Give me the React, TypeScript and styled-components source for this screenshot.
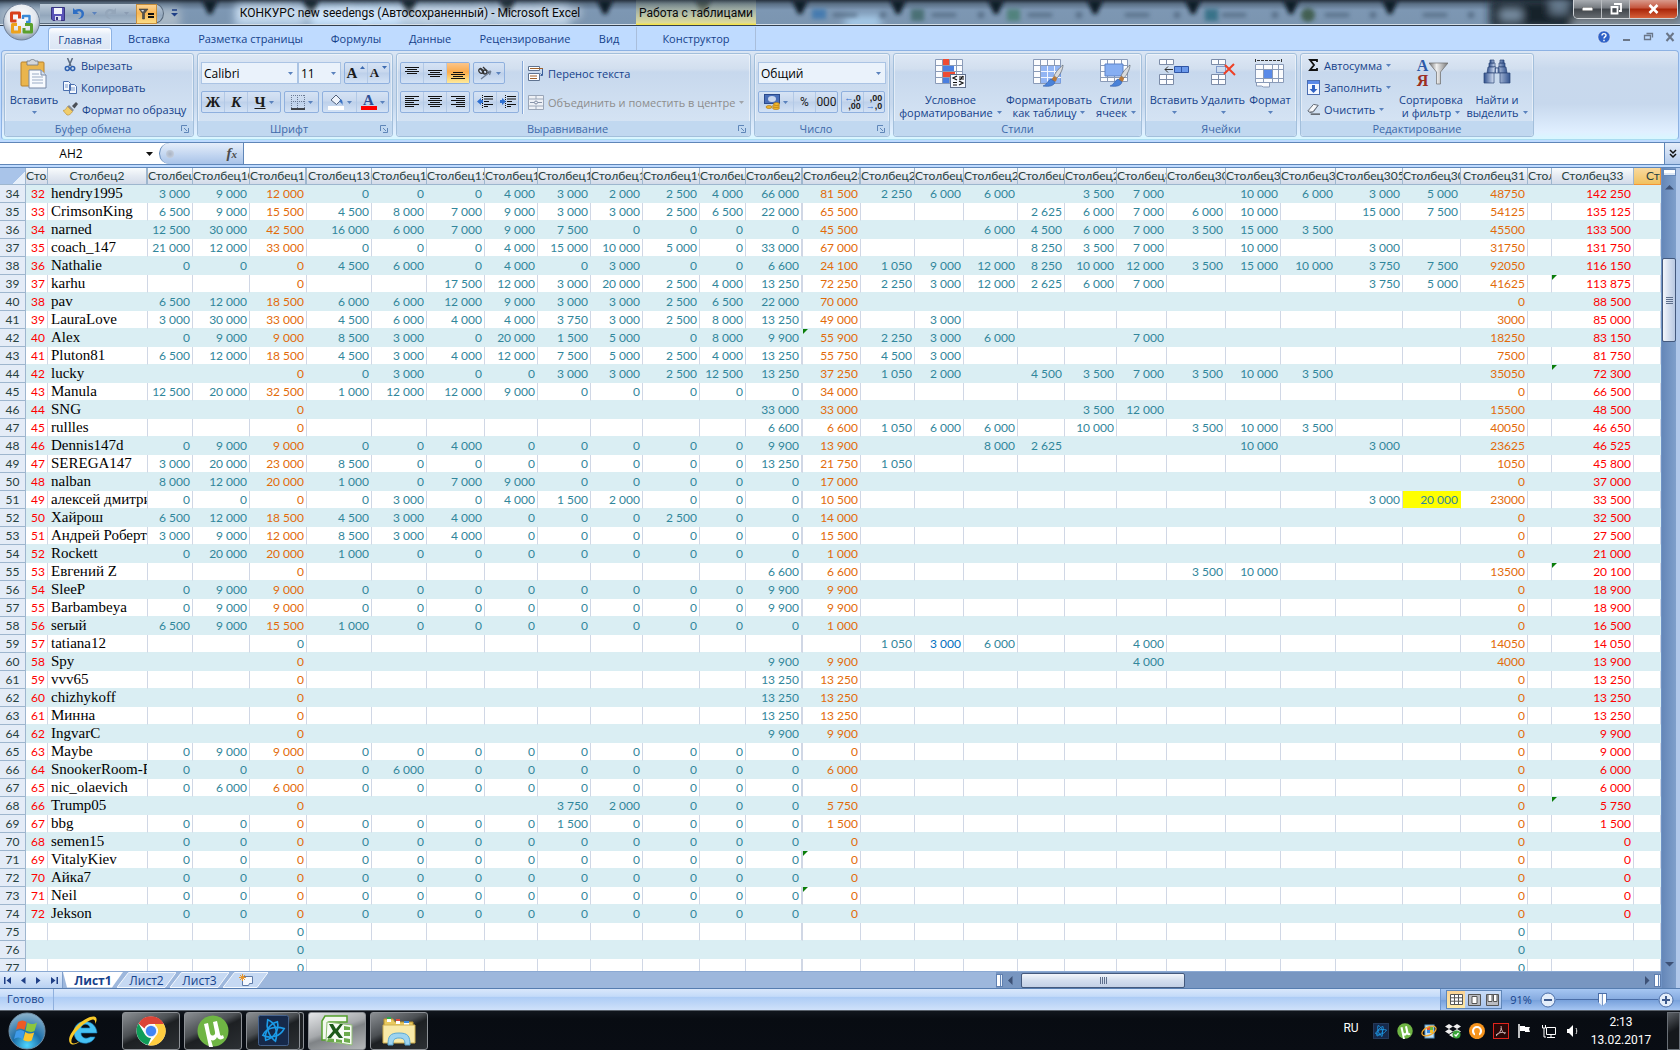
import React from "react";
import styled, { createGlobalStyle, css } from "styled-components";

const UI = `"Open Sans", "Noto Sans", sans-serif`;
const CAPTION = `Roboto, "Open Sans", sans-serif`;
const CELL = `Lato, "Open Sans", sans-serif`;
const NAME = `"Liberation Serif", serif`;

const GlobalStyle = createGlobalStyle`
  *, *::before, *::after { box-sizing: border-box; }
  body { margin: 0; font-family: ${UI}; font-size: 11px; color: #15428b; background: #bfdbff; overflow: hidden; }
  button, select, input { font: inherit; color: inherit; }
  button { border: 0; padding: 0; background: none; }
  svg { display: block; flex: none; }
`;

/* ---------- shell ---------- */
const Desktop = styled.div`
  display: flex;
  flex-direction: column;
  height: 100vh;
`;

/* ---------- title bar ---------- */
const TitleBar = styled.header`
  position: relative;
  display: flex;
  height: 26px;
  color: #0a0a0a;
  font-family: ${CAPTION};
  font-size: 12px;
  background: linear-gradient(#27323f 0, #5a6f85 4px, #7d97b3 10px, #7b95b0 100%);
  border-bottom: 1px solid #33404f;
  box-shadow: inset 0 -1px 0 #d5dfe8;
`;
const Glass = styled.svg`
  position: absolute;
  inset: 0;
  width: 100%;
  height: 24px;
`;
const OfficeButton = styled.button`
  position: absolute;
  left: 3px;
  top: 3px;
  z-index: 2;
  width: 37px;
  height: 38px;
`;
const QuickAccess = styled.div`
  position: relative;
  display: flex;
  align-items: center;
  gap: 7px;
  width: 124px;
  height: 21px;
  margin: 3px 0 0 40px;
  padding-left: 11px;
  border: 1px solid #58697b;
  border-left: 0;
  border-radius: 0 11px 11px 0;
  background: linear-gradient(#bccad8, #93a7bc 60%, #a9bccf);
`;
const QuickFilter = styled.button`
  display: grid;
  place-items: center;
  flex: none;
  width: 21px;
  height: 20px;
  border: 1px solid #c78f3d;
  background: linear-gradient(#fbd394, #f7b655 45%, #fbdc85);
`;
const CustomizeButton = styled.button`
  position: relative;
  width: 20px;
  display: grid;
  place-items: center;
`;
const WindowTitle = styled.h1`
  position: relative;
  flex: 0 0 452px;
  margin: 0;
  text-align: center;
  font-size: 12px;
  font-weight: 400;
  line-height: 27px;
  white-space: nowrap;
  text-shadow: 0 0 8px #fff, 0 0 10px #dce8f4;
`;
const ContextTitle = styled.div`
  position: relative;
  width: 120px;
  line-height: 27px;
  text-align: center;
  white-space: nowrap;
  background: linear-gradient(rgba(90, 105, 110, 0.3), rgba(200, 205, 165, 0.8) 60%, #dcd99a 90%, #f8e53c);
`;
const WindowButtons = styled.div`
  position: relative;
  display: flex;
  height: 19px;
  margin: 0 2px 0 auto;
  border: 1px solid #d0d4d8;
  border-top: 0;
  border-radius: 0 0 5px 5px;
  overflow: hidden;
`;
const WindowButton = styled.button<{ $close?: boolean }>`
  display: grid;
  place-items: center;
  width: ${(p) => (p.$close ? 47 : 28)}px;
  border-right: ${(p) => (p.$close ? 0 : 1)}px solid #b8bcc0;
  background: ${(p) =>
    p.$close
      ? "linear-gradient(#d99a8c, #c4533b 45%, #a92408 50%, #d5603a)"
      : "linear-gradient(#a9adb2, #74797f 45%, #3f444a 50%, #666b70)"};
`;

/* ---------- ribbon tabs ---------- */
const TabRow = styled.nav`
  display: flex;
  height: 24px;
  padding-left: 48px;
  background: #bfdbff;
`;
const RibbonTab = styled.button<{ $w: number; $on?: boolean; $context?: boolean }>`
  width: ${(p) => p.$w}px;
  height: 23px;
  margin-top: 1px;
  color: #15428b;
  white-space: nowrap;
  ${(p) =>
    p.$on &&
    css`
      border: 1px solid #8db2e3;
      border-bottom: 0;
      border-radius: 4px 4px 0 0;
      background: linear-gradient(#fff, #e6eef9 30%, #dbe6f4);
      box-shadow: inset 0 0 0 1px #f4f9ff;
    `}
  ${(p) =>
    p.$context &&
    css`
      margin-left: 5px;
      border-left: 1px solid #a9bedb;
      border-right: 1px solid #a9bedb;
    `}
`;
const TabTools = styled.div`
  display: flex;
  align-items: center;
  gap: 10px;
  margin: 0 4px 2px auto;
`;

/* ---------- ribbon ---------- */
const Ribbon = styled.section`
  display: flex;
  gap: 3px;
  height: 90px;
  margin: 0 1px;
  padding: 2px;
  border: 1px solid #8db2e3;
  border-bottom-color: #a8dcf0;
  border-radius: 4px;
  background: linear-gradient(#dbe6f4, #c9d9ed 20%, #c7d8ed 60%, #e0efff 92%, #d8f7ff);
`;
const Group = styled.fieldset<{ $w: number }>`
  display: flex;
  flex-direction: column;
  width: ${(p) => p.$w}px;
  min-width: 0;
  margin: 0;
  padding: 0;
  border: 1px solid #a3bfdb;
  border-radius: 3px;
  box-shadow: inset 0 0 0 1px rgba(255, 255, 255, 0.45);
  background: linear-gradient(#dee8f5, #d2dfef 18%, #c7d8ed 22%, #d8e6f5);
`;
const GroupBody = styled.div`
  display: flex;
  flex: 1;
  padding: 0 3px;
`;
const GroupFoot = styled.div`
  display: flex;
  align-items: center;
  justify-content: center;
  height: 15px;
  color: #3e6aaa;
  background: #c1d8f0;
  border-radius: 0 0 3px 3px;
  span { flex: 1; text-align: center; line-height: 15px; }
  button { margin-right: 4px; }
`;
const BigButton = styled.button<{ $w: number }>`
  display: flex;
  flex-direction: column;
  align-items: center;
  flex: none;
  width: ${(p) => p.$w}px;
  padding-top: 5px;
  line-height: 13px;
  white-space: nowrap;
`;
const BigIcon = styled.span`
  display: flex;
  align-items: flex-start;
  height: 34px;
`;
const ArrowLine = styled.span`
  display: flex;
  align-items: center;
  justify-content: center;
  gap: 4px;
  height: 13px;
`;
const SmallStack = styled.div<{ $w?: number }>`
  display: flex;
  flex-direction: column;
  width: ${(p) => (p.$w ? p.$w + "px" : "auto")};
`;
const SmallButton = styled.button<{ $off?: boolean }>`
  display: flex;
  align-items: center;
  gap: 4px;
  height: 22px;
  padding-left: 3px;
  white-space: nowrap;
  color: ${(p) => (p.$off ? "#8d8d8d" : "#15428b")};
`;
const Rows = styled.div`
  display: flex;
  flex-direction: column;
  gap: 7px;
  padding-top: 8px;
`;
const Row = styled.div<{ $gap?: number }>`
  display: flex;
  align-items: center;
  gap: ${(p) => p.$gap ?? 3}px;
  height: 22px;
`;
const Joined = styled.div`
  display: flex;
  height: 22px;
  border: 1px solid #8fb0de;
  border-radius: 2px;
  background: linear-gradient(#d6e3f4, #c8d8ee 45%, #bdd0ea 50%, #d3e2f5);
`;
const ToolButton = styled.button<{ $w?: number; $on?: boolean }>`
  display: flex;
  align-items: center;
  justify-content: center;
  gap: 3px;
  width: ${(p) => p.$w ?? 22}px;
  color: #1b1b1b;
  font-family: ${CAPTION};
  font-size: 12px;
  & + & { border-left: 1px solid #b3c9e6; }
  ${(p) => p.$on && "background: linear-gradient(#fbc58a, #fbaa4a 45%, #fdd77a 80%, #ffe99c);"}
  b, i, u { font-family: ${NAME}; font-weight: 700; font-size: 15px; line-height: 18px; }
`;
const SmallA = styled.b`
  && { font-size: 13px; }
`;
const PickWrap = styled.label<{ $w: number }>`
  display: grid;
  width: ${(p) => p.$w}px;
  height: 22px;
  align-items: center;
  border: 1px solid #abc4e4;
  background: #eaf2fb;
  > select, > svg { grid-area: 1 / 1; }
  > svg { justify-self: end; margin-right: 4px; pointer-events: none; }
`;
const Pick = styled.select`
  appearance: none;
  width: 100%;
  height: 20px;
  padding: 0 2px;
  border: 0;
  outline: 0;
  background: transparent;
  color: #000;
  font-size: 12px;
`;
const Divider = styled.div`
  width: 1px;
  margin: 7px 2px 7px 3px;
  background: #86a8d8;
  box-shadow: 1px 0 0 #f0f6fd;
`;

/* ---------- formula bar ---------- */
const FormulaBar = styled.div`
  display: flex;
  flex: none;
  height: 23px;
  margin-top: 2px;
  border-top: 1px solid #5f86b8;
  border-bottom: 1px solid #5f86b8;
  background: #fff;
`;
const NameBox = styled.input`
  width: 142px;
  border: 0;
  outline: 0;
  text-align: center;
  color: #000;
  background: #fff;
  font-size: 12px;
`;
const NameArrow = styled.button`
  display: grid;
  place-items: center;
  width: 15px;
  margin-right: 2px;
`;
const FxPill = styled.div`
  display: flex;
  align-items: center;
  justify-content: space-between;
  width: 85px;
  padding: 0 6px;
  border-left: 1px solid #5f86b8;
  border-right: 1px solid #5f86b8;
  border-radius: 11px 0 0 11px;
  background: linear-gradient(#e6eefa, #c0d4f0 60%, #a9c3e8);
  i { font: italic 700 15px/18px "Liberation Serif", serif; color: #4c4c4c; }
  small { font-size: 11px; }
`;
const Knob = styled.span`
  width: 8px;
  height: 8px;
  border-radius: 50%;
  background: radial-gradient(#a9b3c4, #cdd6e4);
`;
const FormulaInput = styled.input`
  flex: 1;
  min-width: 0;
  border: 0;
  outline: 0;
  color: #000;
`;
const ExpandButton = styled.button`
  display: grid;
  place-items: center;
  width: 16px;
  border-left: 1px solid #5f86b8;
  background: linear-gradient(#e6eefa, #b4cbec);
`;

/* ---------- sheet ---------- */
const Work = styled.main`
  display: flex;
  flex: 1;
  min-height: 0;
  margin-top: 2px;
  border-top: 1px solid #5f86b8;
`;
const SheetColumn = styled.div`
  display: flex;
  flex: 1;
  flex-direction: column;
  min-width: 0;
`;
const SheetView = styled.div`
  flex: 1;
  min-height: 0;
  overflow: hidden;
  background: #fff;
`;
const Sheet = styled.table`
  width: 100%;
  table-layout: fixed;
  border-collapse: separate;
  border-spacing: 0;
  font-family: ${CELL};
  font-size: 12px;
  color: #31869b;
`;
const HeadCell = styled.th<{ $left?: boolean; $on?: boolean; $thick?: boolean; $inset?: boolean }>`
  height: 17px;
  padding: 0 0 0 ${(p) => (p.$inset ? 12 : 0)}px;
  overflow: hidden;
  border-right: ${(p) => (p.$thick ? 2 : 1)}px solid ${(p) => (p.$on ? "#f29536" : "#9eb6ce")};
  border-bottom: 1px solid ${(p) => (p.$on ? "#f29536" : "#9eb6ce")};
  background: ${(p) => (p.$on ? "linear-gradient(#f9d99f, #f1c15f)" : "linear-gradient(#f9fcfd, #e4eaf2 50%, #d3dbe9)")};
  color: #27413e;
  font-size: 12px;
  font-weight: 400;
  line-height: 16px;
  text-align: ${(p) => (p.$left ? "left" : "center")};
  white-space: nowrap;
`;
const CornerCell = styled.th`
  padding: 0;
  height: 17px;
  border-right: 1px solid #9eb6ce;
  border-bottom: 1px solid #9eb6ce;
  background: linear-gradient(135deg, #a9c4e9 70%, #e6effa 70%);
`;
const RowHead = styled.th`
  height: 18px;
  padding: 0;
  border-right: 1px solid #9eb6ce;
  border-bottom: 1px solid #9eb6ce;
  background: #e4ecf7;
  color: #27413e;
  font-size: 12px;
  font-weight: 400;
  line-height: 17px;
  text-align: center;
`;
type Tone = "teal" | "orange" | "red" | "blue";
const tones: Record<Tone, string> = { teal: "#31869b", orange: "#e26b0a", red: "#ff0000", blue: "#0070c0" };
const Cell = styled.td<{ $tone?: Tone; $thick?: boolean; $flag?: boolean; $mark?: boolean }>`
  height: 18px;
  padding: 0 2px 0 0;
  overflow: hidden;
  border-right: ${(p) => (p.$thick ? 2 : 1)}px solid #d0d7e5;
  border-bottom: 1px solid #daeef3;
  color: ${(p) => tones[p.$tone ?? "teal"]};
  line-height: 17px;
  text-align: right;
  white-space: nowrap;
  ${(p) => p.$flag && "background-image: linear-gradient(135deg, #0a7d0a 3px, transparent 4px);"}
`;
const NameCell = styled(Cell)`
  padding: 0 0 0 3px;
  color: #000;
  font-family: ${NAME};
  font-size: 15px;
  text-align: left;
`;
const BodyRow = styled.tr<{ $band: boolean }>`
  ${(p) => p.$band && `td { background-color: #daeef3; border-right-color: #daeef3; }`}
  td.marked { background-color: #ffff00; border-right-color: #ffff00; }
`;

/* ---------- scroll bars ---------- */
const VScroll = styled.div`
  display: flex;
  flex-direction: column;
  align-items: center;
  width: 19px;
  padding-right: 4px;
  border-left: 1px solid #6f93c5;
  background: linear-gradient(90deg, #6587b8, #7f9fcb 14px, #b1c8ea 14px);
`;
const VSplit = styled.div`
  width: 13px;
  height: 7px;
  margin: 1px 0 4px;
  border: 1px solid #6587b8;
  background: #fff;
  box-shadow: inset 0 -2px 0 #dce7f5;
`;
const VThumb = styled.div`
  display: grid;
  place-content: center;
  gap: 1px;
  width: 14px;
  height: 84px;
  margin-top: 64px;
  border: 1px solid #44597d;
  border-radius: 2px;
  background: linear-gradient(90deg, #f3f6fb, #d4deee 50%, #b9c9e2);
  i { width: 7px; height: 1px; background: #5e6f8c; }
`;
const ScrollArrow = styled.button<{ $end?: boolean }>`
  display: grid;
  place-items: center;
  width: 14px;
  height: 14px;
  ${(p) => p.$end && "margin-top: auto; margin-bottom: 17px;"}
`;
const BottomBar = styled.div`
  display: flex;
  flex: none;
  height: 17px;
  border-top: 1px solid #8ba9d3;
  background: #9db7dc;
`;
const SheetNav = styled.div`
  display: flex;
  align-items: center;
  justify-content: space-around;
  width: 63px;
  border-right: 1px solid #7f9fcb;
  background: linear-gradient(#e3eefc, #b9d1f2);
`;
const TabShape = styled.div<{ $on?: boolean; $w: number }>`
  display: grid;
  width: ${(p) => p.$w}px;
  margin-right: -6px;
  > * { grid-area: 1 / 1; }
`;
const SheetTab = styled.button<{ $on?: boolean }>`
  display: grid;
  place-items: center;
  height: 16px;
  color: #15428b;
  font-size: 12px;
  font-weight: ${(p) => (p.$on ? 700 : 400)};
  line-height: 15px;
`;
const HScroll = styled.div`
  display: flex;
  align-items: center;
  flex: 0 1 665px;
  margin-left: auto;
  background: #7896c1;
`;
const HSplit = styled.div`
  width: 7px;
  height: 13px;
  border: 1px solid #5f7fb0;
  background: linear-gradient(90deg, #fff 3px, #6587b8 3px, #6587b8 4px, #e8f0fa 4px);
`;
const HThumb = styled.div`
  display: flex;
  align-items: center;
  justify-content: center;
  gap: 1px;
  width: 164px;
  height: 15px;
  margin-left: 4px;
  margin-right: auto;
  border: 1px solid #44597d;
  border-radius: 2px;
  background: linear-gradient(#f3f6fb, #d4deee 50%, #c3d0e5);
  i { width: 1px; height: 7px; background: #5e6f8c; }
`;

/* ---------- status bar ---------- */
const StatusBar = styled.footer`
  display: flex;
  flex: none;
  height: 22px;
  border-top: 1px solid #567db0;
  background: linear-gradient(#d9e7fb, #c4dbf9 35%, #adccf5 40%, #cfe1fa);
`;
const Ready = styled.span`
  width: 54px;
  padding-left: 7px;
  border-right: 1px solid #8fb0de;
  line-height: 20px;
`;
const StatusRight = styled.div`
  display: flex;
  align-items: center;
  width: 240px;
  margin-left: auto;
  padding-left: 5px;
  border-left: 1px solid #6f97cf;
  background: linear-gradient(#a6c6f2, #86abe0 50%, #79a2dc 55%, #a5c5f2);
`;
const ViewButtons = styled.div`
  display: flex;
  height: 19px;
  border: 1px solid #5f86b8;
`;
const ViewButton = styled.button<{ $on?: boolean }>`
  display: grid;
  place-items: center;
  width: 18px;
  background: ${(p) => (p.$on ? "linear-gradient(#fbd394, #fde9a6)" : "linear-gradient(#c9dcf6, #a9c5ee)")};
`;
const ZoomValue = styled.button`
  width: 38px;
  text-align: center;
`;
const ZoomSlider = styled.input`
  appearance: none;
  width: 102px;
  height: 16px;
  margin: 0;
  background: linear-gradient(#4a6da7, #4a6da7) center / 100% 1px no-repeat;
  &::-webkit-slider-thumb {
    appearance: none;
    width: 9px;
    height: 13px;
    background: linear-gradient(90deg, #4a6da7 1px, #fff 1px, #dbe6f6 4px, #7a97c4 4px, #7a97c4 5px, #fff 5px, #fff 8px, #4a6da7 8px);
    border-top: 1px solid #4a6da7;
    clip-path: polygon(0 0, 100% 0, 100% 68%, 50% 100%, 0 68%);
  }
`;

/* ---------- Windows taskbar ---------- */
const Taskbar = styled.footer`
  display: flex;
  align-items: center;
  flex: none;
  height: 40px;
  padding-left: 8px;
  border-top: 1px solid #59616b;
  background: linear-gradient(#11161d, #080c12 20%, #090d14);
  color: #fff;
`;
const TaskIcon = styled.button<{ $w: number }>`
  display: grid;
  place-items: center;
  width: ${(p) => p.$w}px;
  height: 38px;
`;
const TaskButton = styled.button<{ $on?: boolean; $stack?: boolean }>`
  display: grid;
  place-items: center;
  width: ${(p) => (p.$stack ? 54 : 58)}px;
  height: 38px;
  margin-right: ${(p) => (p.$stack ? 8 : 4)}px;
  border: 1px solid #8c9095;
  border-radius: 3px;
  background: ${(p) =>
    p.$on
      ? "linear-gradient(160deg, #e4e6e8, #a6a9ac 45%, #7f8386 55%, #b5b8ba)"
      : "linear-gradient(155deg, #8b8f93, #4b4f53 40%, #1d2023 52%, #2c3034)"};
  box-shadow: ${(p) => (p.$stack ? "4px 0 0 -1px #1d2023, 4px 0 0 0 #8c9095" : "none")};
`;
const Tray = styled.div`
  display: flex;
  align-items: center;
  gap: 8px;
  margin-left: auto;
`;
const Lang = styled.button`
  width: 16px;
  margin: 0 6px 5px 0;
  font-family: ${CAPTION};
  font-size: 12px;
`;
const Clock = styled.time`
  width: 72px;
  margin: 0 2px 0 -4px;
  text-align: center;
  font-family: ${CAPTION};
  font-size: 12px;
  line-height: 18px;
`;
const ShowDesktop = styled.button`
  width: 13px;
  height: 38px;
  border: 1px solid #6a7077;
  background: linear-gradient(150deg, #5b6066, #15181c 50%);
`;

/* ---------- icons ---------- */
const Arrow = ({ c = "#5a82bd" }: { c?: string }) => (
  <svg width="5" height="3" viewBox="0 0 5 3"><path d="M0 0h5L2.5 3z" fill={c} /></svg>
);
const Tri = ({ d, c = "#3d5176" }: { d: string; c?: string }) => (
  <svg width="9" height="9" viewBox="0 0 9 9"><path d={d} fill={c} /></svg>
);
const Launcher = () => (
  <svg width="8" height="8" viewBox="0 0 8 8" fill="none" stroke="#5f86b8"><path d="M.5 6V.5H6M7.500 3v4.500H3M3 3l3 3" /></svg>
);
const OfficeLogo = () => (
  <svg width="37" height="38" viewBox="0 0 37 38">
    <defs>
      <radialGradient id="orbBase" cx=".5" cy=".35" r=".65"><stop offset="0" stopColor="#fff" /><stop offset=".6" stopColor="#e3e8ef" /><stop offset="1" stopColor="#8d9cb0" /></radialGradient>
    </defs>
    <circle cx="18.500" cy="19" r="18" fill="url(#orbBase)" stroke="#6f8098" />
    <g fill="none" strokeWidth="3" strokeLinejoin="round">
      <path d="M13.500 18H8.500v-8h8v5.500" stroke="#d8401c" />
      <path d="M20 16v-3h6.500v6H23" stroke="#3a8ad8" strokeWidth="2.400" />
      <path d="M16.500 23v6h-7v-7.500h4.500" stroke="#eda21b" />
      <path d="M22 21.500h6.500v7.500H21V25" stroke="#5aa02c" />
    </g>
  </svg>
);
const SaveIcon = () => (
  <svg width="14" height="14" viewBox="0 0 14 14"><path d="M.5.5h13v13H2l-1.500-1.500z" fill="#5a55b8" stroke="#37347f" /><path d="M3 1h8v6H3z" fill="#f4f6fc" /><path d="M4 9h6v4.500H4z" fill="#dfe3f2" /><path d="M5 10h2v3H5z" fill="#37347f" /></svg>
);
const UndoIcon = ({ c = "#2f6fc4", flip = false }: { c?: string; flip?: boolean }) => (
  <svg width="13" height="13" viewBox="0 0 13 13"><g transform={flip ? "matrix(-1 0 0 1 13 0)" : undefined}><path d="M1 1v6h6L5 5c2-1.500 4.500-.5 4.500 2S8 11 6 12c4 0 6-2.500 6-5.500C12 2.500 7 .5 3 3z" fill={c} /></g></svg>
);
const FilterEq = () => (
  <svg width="15" height="12" viewBox="0 0 15 12"><path d="M0 1h9L5.500 5.500V11h-2V5.500z" fill="#555" stroke="#333" strokeWidth=".5" /><path d="M2 2h3L4 4z" fill="#ddd" /><path d="M9 5h6v2H9zM9 8h6v2H9z" fill="#111" /></svg>
);
const PasteIcon = () => (
  <svg width="28" height="30" viewBox="0 0 28 30"><rect x="1" y="3" width="23" height="24" rx="1" fill="#eab54d" stroke="#b9822c" /><path d="M7 2h3c0-2 5-2 5 0h3v4H7z" fill="#d4d7dc" stroke="#6f7680" strokeWidth=".8" /><path d="M9 11h12l5 5v13H9z" fill="#f7fafe" stroke="#7688a6" /><path d="M21 11v5h5" fill="#d5dfee" stroke="#7688a6" /><path d="M12 15h7M12 18h11M12 21h11M12 24h11" stroke="#9aabc5" /></svg>
);
const CutIcon = () => (
  <svg width="14" height="14" viewBox="0 0 14 14" fill="none"><path d="M4.500 0l3.500 8M9.500 0L6 8" stroke="#5a6a80" strokeWidth="1.500" /><circle cx="4.300" cy="10.500" r="2" stroke="#2d5fae" strokeWidth="1.500" /><circle cx="9.700" cy="10.500" r="2" stroke="#2d5fae" strokeWidth="1.500" /></svg>
);
const CopyIcon = () => (
  <svg width="14" height="13" viewBox="0 0 14 13"><g fill="#f4f8fe" stroke="#4a6fae"><path d="M.5.500h5l2 2v7h-7zM6.500 3.500h5l2 2v7h-7z" /><path d="M2 4h3M2 6h3M8 7h4M8 9h4" stroke="#7c9bcc" /></g></svg>
);
const BrushIcon = () => (
  <svg width="15" height="14" viewBox="0 0 15 14"><path d="M9 4l4-4 2 2-3.500 4.500z" fill="#4a4f57" /><path d="M6 3l5 5-1.500 1.500L4.500 4.500z" fill="#8a8f98" /><path d="M4.500 4.500l5 5C8 12 6 13.500 4 13L0 8.500c2 0 3-1.500 4.500-4z" fill="#f0cd6c" stroke="#b88a2c" strokeWidth=".6" /></svg>
);
const SizeMark = ({ up }: { up?: boolean }) => (
  <svg width="5" height="14" viewBox="0 0 5 14"><path d={up ? "M0 3h5L2.500 0z" : "M0 0h5L2.500 3z"} fill="#3c6ab0" /></svg>
);
const BorderIcon = () => (
  <svg width="14" height="15" viewBox="0 0 14 15"><g stroke="#6a7a94" strokeDasharray="1 1"><path d="M.5 0v13M6.500 0v13M13.500 0v13M0 .5h14M0 6.500h14" /></g><path d="M0 14h14" stroke="#111" strokeWidth="1.500" /></svg>
);
const FillIcon = () => (
  <svg width="16" height="16" viewBox="0 0 16 16"><path d="M3 6l5-5 5 5-4.500 4.500z" fill="#eef3fb" stroke="#51607a" /><path d="M12 5c2 0 3 2 2.500 6-1-2-2-3-3-3z" fill="#3a72c4" /><path d="M0 12h16v4H0z" fill="#fff" /></svg>
);
const LetterColor = styled.span`
  width: 16px;
  border-bottom: 4px solid #ff0000;
  color: #2d4f95;
  font: 700 15px/12px "Liberation Serif", serif;
`;
const Lines = ({ y, w, align = "center" }: { y: number[]; w: number[]; align?: "left" | "center" | "right" }) => (
  <svg width="15" height="14" viewBox="0 0 15 14">
    {y.map((v, k) => {
      const rest = 14 - w[k];
      const x = align === "left" ? 0 : align === "right" ? rest : rest / 2;
      return <rect key={v} x={x} y={v} width={w[k]} height="1" fill="#111" />;
    })}
  </svg>
);
const ALL = [1, 3, 5, 7, 9, 11];
const IndentIcon = ({ right }: { right?: boolean }) => (
  <svg width="16" height="14" viewBox="0 0 16 14"><path d="M7 1.500h9M7 4h9M7 6.500h5M7 9.500h9M7 11.500h4" stroke="#111" /><path d="M5.500 0v14" stroke="#111" strokeDasharray="1 1" /><path d={right ? "M0 5h2V3l4 3.500L2 10V8H0z" : "M6 5H4V3L0 6.500 4 10V8h2z"} fill="#2f6fd0" /></svg>
);
const OrientIcon = () => (
  <svg width="16" height="14" viewBox="0 0 16 14"><g fill="none" stroke="#333" strokeWidth="1.300"><ellipse cx="4" cy="5" rx="2.500" ry="2" transform="rotate(45 4 5)" /><path d="M3 2l4 5" /><path d="M6 1l6 6" /><ellipse cx="8" cy="6" rx="2" ry="2" /></g><path d="M4 13l9-7M14 5l-4 .5M14 5l-1.500 4" stroke="#6a7a90" fill="none" strokeWidth="1.200" /></svg>
);
const WrapIcon = () => (
  <svg width="16" height="15" viewBox="0 0 16 15"><path d="M.5.500h11v4H.5zM.5 7.500h11v7H.5z" fill="#fff" stroke="#5f7390" /><path d="M2 2.500h13M2 10h7M2 12.500h7" stroke="#a0622c" /><path d="M14.500 3v6M14.500 9.500l-2-2M14.500 9.500h-2" stroke="#3b5f9a" fill="none" /></svg>
);
const MergeIcon = () => (
  <svg width="16" height="15" viewBox="0 0 16 15"><path d="M.5.500h15v14H.5zM.5 4h15M.5 11h15M8 .5V4M8 11v3.500" fill="#eef1f6" stroke="#9aa6b8" /><path d="M2 7.500h4M10 7.500h4" stroke="#8793a8" /><circle cx="8" cy="7.500" r="1.500" fill="none" stroke="#7c88a0" /></svg>
);
const MoneyIcon = () => (
  <svg width="16" height="16" viewBox="0 0 16 16"><rect x=".5" y=".5" width="15" height="9" fill="#4a6fb8" stroke="#2b4a8c" /><ellipse cx="8" cy="5" rx="4" ry="3" fill="#c8d6ee" /><g fill="#f1b62d" stroke="#a8720f" strokeWidth=".6"><ellipse cx="12" cy="14" rx="3.500" ry="1.500" /><ellipse cx="12" cy="12" rx="3.500" ry="1.500" /><ellipse cx="12.500" cy="10" rx="3" ry="1.500" /><ellipse cx="5" cy="13" rx="3" ry="1.500" /></g></svg>
);
const Decimal = styled.span`
  display: grid;
  font: 700 9px/8px "Liberation Sans", sans-serif;
  text-align: right;
  em { font-style: normal; color: #2f6fd0; }
`;
const GridBase = ({ w = 28, h = 25 }: { w?: number; h?: number }) => (
  <path d={`M.5.500h${w - 1}v${h - 1}H.5zM7.500 0v${h}M14.500 0v${h}M21.500 0v${h}M0 6.500h${w}M0 12.500h${w}M0 18.500h${w}`} fill="#fbfcfe" stroke="#8a9bb8" />
);
const Paint = () => (
  <g><path d="M30 6c-4 3-8 8-9 11l3 2c3-3 6-9 6-13z" fill="#d8dadd" stroke="#5f656e" strokeWidth=".7" /><path d="M21 17l3 2c0 2-1 3-2 4l-4-2z" fill="#b8793a" /><path d="M18 20l4 3c-1 4-6 5-12 4 4-1 4-5 8-7z" fill="#4a82d8" stroke="#2d5aa8" strokeWidth=".6" /></g>
);
const CondIcon = () => (
  <svg width="32" height="30" viewBox="0 0 32 30"><GridBase /><path d="M8 0h6v6H8zM8 13h12v5H8z" fill="#ee4b33" /><path d="M8 7h11v5H8zM8 19h6v5H8z" fill="#4a7fe0" /><rect x="15.500" y="15.500" width="15" height="13" fill="#f6f9ff" stroke="#5f6f8c" /><path d="M22 17l-4 2 4 2M18 23.500h4M18 26h4M24 18h5M24 20h5M28 17l-3 4M24 22l4 2-4 2" fill="none" stroke="#111" strokeWidth="1.200" /></svg>
);
const TableIcon = () => (
  <svg width="32" height="30" viewBox="0 0 32 30"><GridBase /><path d="M8 7h20v17H8z" fill="#6f9ef0" opacity=".75" /><path d="M14.500 7v17M21.500 7v17M8 12.500h20M8 18.500h20" stroke="#f0f5ff" /><Paint /></svg>
);
const StylesIcon = () => (
  <svg width="32" height="30" viewBox="0 0 32 30"><GridBase h={23} /><path d="M5 5h18v12H5z" fill="#86aef2" stroke="#5d83c8" /><Paint /></svg>
);
const InsertCells = () => (
  <svg width="32" height="28" viewBox="0 0 32 28"><g fill="#fbfcfe" stroke="#7c8ca8"><path d="M1.500.500h14v5h-14zM8.500.500v5M1.500 15.500h14v10h-14zM8.500 15.500v10M1.500 20.500h14" /></g><path d="M16.500 7.500h14v6h-14zM23.500 7.500v6" fill="#6a98ea" stroke="#2f55a5" /><path d="M7 10.500h8M10 7.500l-3 3 3 3" fill="none" stroke="#333" /></svg>
);
const DeleteCells = () => (
  <svg width="28" height="28" viewBox="0 0 28 28"><g fill="#fbfcfe" stroke="#7c8ca8"><path d="M2.500.500h14v5h-14zM9.500.500v5M2.500 15.500h14v10h-14zM9.500 15.500v10M2.500 20.500h14" /></g><path d="M7.500 7.500h9v6h-9z" fill="none" stroke="#2f55a5" strokeDasharray="1 1" /><path d="M16 6l10 10M25 5L15 15" stroke="#ee4026" strokeWidth="2" /></svg>
);
const FormatCells = () => (
  <svg width="30" height="29" viewBox="0 0 30 29"><path d="M.5 0v4M26.500 0v4M2 1.500h24" stroke="#333" strokeDasharray="3 1" /><path d="M.5 5.500h28v18h-28zM8.500 5.500v18M17.500 5.500v18M23.500 5.500v18M.5 10.500h28M.5 19.500h28" fill="#fbfcfe" stroke="#8a9bb8" /><path d="M9 11h8v8H9z" fill="#5a8ae8" /><path d="M1.500 24v3h5l2 1h6v-4" fill="#fbfcfe" stroke="#8a9bb8" /></svg>
);
const SumIcon = () => (
  <svg width="13" height="12" viewBox="0 0 13 12"><path d="M10 3V1H3l4 5-4 5h7V9" fill="none" stroke="#111" strokeWidth="1.800" /></svg>
);
const FillDown = () => (
  <svg width="13" height="15" viewBox="0 0 13 15"><rect x=".5" y=".5" width="12" height="14" fill="#f2f7ff" stroke="#4a6db0" /><path d="M1 1h11v3H1z" fill="#5a8ae8" /><path d="M5 5h3v4h2.500l-4 4-4-4H5z" fill="#2f62c4" /></svg>
);
const Eraser = () => (
  <svg width="13" height="12" viewBox="0 0 14 12"><path d="M1 8l6-7 5 1-5 7-4 1z" fill="#f7f8fa" stroke="#5c6470" /><path d="M1 8l5 1 6-7" fill="none" stroke="#5c6470" strokeWidth=".6" /><path d="M4 11.500h10" stroke="#111" /></svg>
);
const SortBox = styled.span`
  display: grid;
  grid-template-columns: 13px 17px;
  height: 30px;
  font: 700 16px/14px "Liberation Serif", serif;
  color: #2d5aa8;
  span:nth-of-type(2) { grid-row: 2; color: #9c2f22; }
  svg { grid-row: 1 / 3; grid-column: 2; }
`;
const Funnel = () => (
  <svg width="19" height="26" viewBox="0 0 19 26"><defs><linearGradient id="metal"><stop offset="0" stopColor="#6e6e6e" /><stop offset=".4" stopColor="#f0f0f0" /><stop offset="1" stopColor="#777" /></linearGradient></defs><path d="M0 4h19l-7.500 9v12h-4V13z" fill="url(#metal)" stroke="#6b6b6b" strokeWidth=".7" /></svg>
);
const Binoculars = () => (
  <svg width="28" height="26" viewBox="0 0 28 26"><defs><linearGradient id="lens"><stop offset="0" stopColor="#2f4f8c" /><stop offset=".4" stopColor="#dbe6f8" /><stop offset="1" stopColor="#34548f" /></linearGradient></defs><g fill="url(#lens)" stroke="#2c4677" strokeWidth=".7"><path d="M6 4h6v4H6zM16 4h6v4h-6z" /><path d="M7 1h4v3H7zM17 1h4v3h-4z" /><path d="M5 8h8l-1 6H4zM15 8h8l1 6h-8z" /><path d="M1 14h10v10H1zM17 14h10v10H17z" /><path d="M12 9h4v5h-4z" /></g></svg>
);
const Round = ({ plus }: { plus?: boolean }) => (
  <svg width="16" height="16" viewBox="0 0 16 16"><circle cx="8" cy="8" r="7" fill="#e3edfa" stroke="#4a6da7" /><path d={plus ? "M4 8h8M8 4v8" : "M4 8h8"} stroke="#3e5a8c" strokeWidth="2" /></svg>
);
const StartOrb = () => (
  <svg width="38" height="38" viewBox="0 0 38 38"><defs><radialGradient id="orb" cx=".5" cy=".9" r=".9"><stop offset="0" stopColor="#4fd6ff" /><stop offset=".45" stopColor="#1c6ea8" /><stop offset="1" stopColor="#8fb4cc" /></radialGradient></defs><circle cx="19" cy="19" r="18" fill="url(#orb)" stroke="#6f8ea5" /><path d="M10 10c3-2 6-2 8.500 0l-2 8c-3-2-6-2-8.500 0z" fill="#ee5a24" /><path d="M19.500 10.500c3 2 6 2 9.500 0l-2.500 8.500c-3 1.500-6 1-9-.5z" fill="#8cc63e" /><path d="M8 19.500c3-2 6-2 8.500 0l-2 7.500c-3-2-6-2-8.500 0z" fill="#3f9bea" /><path d="M17.200 20c3 2 6 2 9 .5l-2.500 8c-3 1.500-6 1-8.500-.5z" fill="#fcc52c" /></svg>
);
const IeIcon = () => (
  <svg width="32" height="32" viewBox="0 0 32 32"><path d="M27 22c-4 10-22 8-21-6C7 3 28 3 29 18H13c0 6 7 6 9 4zM13 13h9c-1-5-8-5-9 0z" fill="#46c1f2" stroke="#1a7fc0" strokeWidth=".6" /><path d="M3 29C-4 24 10 6 22 2c7-2 8 2 5 7 1-6-3-5-8-2C9 13 1 25 4 28c2 1 5 0 8-2-4 4-7 4-9 3z" fill="#f8c928" /></svg>
);
const ChromeIcon = () => (
  <svg width="30" height="30" viewBox="0 0 30 30"><circle cx="15" cy="15" r="14.500" fill="#fff" /><path d="M2.500 7.500A14.500 14.500 0 0127.800 8H15a7 7 0 00-6.500 4.500z" fill="#db4437" /><path d="M2.500 7.500l6.300 10.800A7 7 0 0015 22l-3 7A14.500 14.500 0 012.500 7.500z" fill="#0f9d58" /><path d="M27.800 8A14.500 14.500 0 0112.500 29.300L21 18.500A7 7 0 0019 9V8z" fill="#ffcd40" /><circle cx="15" cy="15" r="6.500" fill="#f1f1f1" /><circle cx="15" cy="15" r="5.200" fill="#4285f4" /></svg>
);
const Torrent = ({ s }: { s: number }) => (
  <svg width={s} height={s} viewBox="0 0 32 32"><circle cx="16" cy="16" r="15.500" fill="#6fb544" /><path d="M7 9l4-1 2 10c1 4 6 3 5-1L16 7l4-1 3 13c0 2 2 2 3 1l1 3c-2 2-6 2-7-1-1 3-4 4-6 3l2 7h-4z" fill="#fff" /></svg>
);
const Knot = ({ s }: { s: number }) => (
  <svg width={s} height={s} viewBox="0 0 32 32"><rect x=".5" y=".5" width="31" height="31" rx="2" fill="#16294a" stroke="#46648f" /><g fill="none" stroke="#1b9be8" strokeWidth="1.700"><path d="M10 5c8 3 11 12 8 22-7-5-10-14-8-22z" /><path d="M5 21c3-7 12-10 22-7-4 8-14 11-22 7z" /><path d="M8 26C6 18 12 9 20 7c2 8-3 17-12 19z" /></g></svg>
);
const ExcelIcon = () => (
  <svg width="32" height="31" viewBox="0 0 32 31"><path d="M4 1h22v6H8v18H1V6z" fill="#f2f8ee" stroke="#54a02c" strokeWidth="1.500" /><path d="M6 7l25 3v20L5 26z" fill="#f7fbf4" stroke="#8fbf74" /><path d="M8 9h4l3 5 4-5h3l-5 7 5 7h-4l-4-5-4 5H6l6-7z" fill="#1d5a1a" /><path d="M23 11l6 1v3h-6zM23 17h6v4h-6zM23 23l6 1v4l-6-1zM7 23l6 1v3H6zM15 24l6 1v3l-6-1z" fill="#6cab4c" /></svg>
);
const FolderIcon = () => (
  <svg width="34" height="30" viewBox="0 0 34 30"><path d="M2 3h9l2 3h18v20H2z" fill="#e9c95f" stroke="#b8932c" /><path d="M5 1h4v5H5zM14 3h4v5h-4zM22 5h5v4h-5z" fill="#fff" /><path d="M5 1h4v2H5z" fill="#2fa84a" /><path d="M14 3h4v2h-4z" fill="#e0483a" /><path d="M22 5h5v2h-5z" fill="#3a8ae0" /><path d="M1 9h32v18H1z" fill="#f8e9a8" stroke="#cfae4c" /><path d="M6 29c0-9 2-12 11-12s11 3 11 12h-5c0-5-1-7-6-7s-6 2-6 7z" fill="#9ed4f0" stroke="#5aa8d4" /></svg>
);
const Avast = () => (
  <svg width="16" height="16" viewBox="0 0 16 16"><circle cx="8" cy="8" r="8" fill="#f7941d" /><circle cx="8" cy="8" r="4" fill="none" stroke="#fff" strokeWidth="2.200" /><path d="M6 10h4v6H6z" fill="#f7941d" /></svg>
);
const UpdateIcon = () => (
  <svg width="16" height="16" viewBox="0 0 16 16"><rect x="4" y="2" width="9" height="13" fill="#bfe0f5" stroke="#5a9ac8" /><path d="M6 4h3v3H6z" fill="#e8552c" /><path d="M9 4h3v3H9z" fill="#6cb83a" /><path d="M6 7h3v3H6z" fill="#3a8ae0" /><path d="M9 7h3v3H9z" fill="#f5c12c" /><ellipse cx="8" cy="8" rx="7.500" ry="4" fill="none" stroke="#f0a52c" strokeWidth="1.300" transform="rotate(-25 8 8)" /></svg>
);
const Dropbox = () => (
  <svg width="16" height="16" viewBox="0 0 16 16"><path d="M4 1l4 2.500L4 6 0 3.500zM12 1l4 2.500L12 6 8 3.500zM4 6l4 2.500L4 11 0 8.500zM12 6l4 2.500L12 11 8 8.500zM4 12l4-2.500 4 2.500-4 2.500z" fill="#f0f0f0" /><circle cx="11.500" cy="11.500" r="4" fill="#3aa53a" /><path d="M9.500 11.500l1.500 1.500 2.500-3" fill="none" stroke="#fff" strokeWidth="1.300" /></svg>
);
const Acrobat = () => (
  <svg width="16" height="16" viewBox="0 0 16 16"><rect x=".5" y=".5" width="15" height="15" fill="#2a0808" stroke="#e0241c" /><path d="M3 13c4-3 6-7 5-10M3 12c3-3 7-3 10-2M8 5c1 3 2 5 4 6" fill="none" stroke="#c8b0b0" /></svg>
);
const FlagIcon = () => (
  <svg width="16" height="16" viewBox="0 0 16 16"><path d="M2 1v14" stroke="#fff" strokeWidth="1.500" /><path d="M3 3h5v1h5l-1 2 1 3H8V8H3z" fill="#fff" /></svg>
);
const NetIcon = () => (
  <svg width="16" height="16" viewBox="0 0 16 16" fill="none" stroke="#fff"><path d="M5.500 4.500h9v7h-9zM10 12v2M6 14.500h8M1.500 2v3h3V2M3 5v9h2" /></svg>
);
const SoundIcon = () => (
  <svg width="16" height="16" viewBox="0 0 16 16"><path d="M2 6h2l4-4v12l-4-4H2z" fill="#fff" /><path d="M11 5c1 2 1 4 0 6" fill="none" stroke="#e8e8e8" /></svg>
);
const TabFace = ({ w, on }: { w: number; on?: boolean }) => (
  <svg width={w} height="16" viewBox={`0 0 ${w} 16`} aria-hidden="true">
    <path
      d={on ? `M0 0h${w}L${w - 11} 15.500H4z` : `M11.500 .5H${w}L${w - 11} 15.500H0z`}
      fill={on ? "#fff" : "#c6d9f3"}
      stroke={on ? "none" : "#f4f8fe"}
    />
  </svg>
);

/* ---------- data ---------- */
const columns: { title: string; w?: number; left?: boolean; thick?: boolean; tone?: Tone; plain?: boolean }[] = [
  { title: "Столбец9", w: 45, left: true },
  { title: "Столбец10", w: 57, left: true },
  { title: "Столбец11", w: 57, left: true, tone: "orange" },
  { title: "Столбец13", w: 65 },
  { title: "Столбец14", w: 55, left: true },
  { title: "Столбец15", w: 58, left: true },
  { title: "Столбец16", w: 53, left: true },
  { title: "Столбец17", w: 53, left: true },
  { title: "Столбец18", w: 52, left: true },
  { title: "Столбец19", w: 57, left: true },
  { title: "Столбец20", w: 46, left: true },
  { title: "Столбец21", w: 57, left: true, thick: true },
  { title: "Столбец23", w: 58, left: true, tone: "orange" },
  { title: "Столбец24", w: 54, left: true },
  { title: "Столбец25", w: 49, left: true },
  { title: "Столбец26", w: 54, left: true },
  { title: "Столбец27", w: 47, left: true },
  { title: "Столбец28", w: 52, left: true },
  { title: "Столбец30", w: 50, left: true },
  { title: "Столбец302", w: 59, left: true },
  { title: "Столбец303", w: 55, left: true },
  { title: "Столбец304", w: 55, left: true },
  { title: "Столбец305", w: 67 },
  { title: "Столбец306", w: 58, left: true },
  { title: "Столбец31", w: 67, tone: "orange", plain: true },
  { title: "Столбец32", w: 24, left: true },
  { title: "Столбец33", w: 82, tone: "red" },
];

const ZEROS = "0,0,0,0,0,0,0,0,0,0,0,0,0";
const NONE = ",,,,,,,,,,";
const MID = "0,0,0,0,0,0,0,0";
/* place; name; first half; second half; subtotal; total; flagged column */
const source = `
32;hendry1995;3000,9000,12000,0,0,0,4000,3000,2000,2500,4000,66000,81500;2250,6000,6000,,3500,7000,,10000,6000,3000,5000;48750;142250
33;CrimsonKing;6500,9000,15500,4500,8000,7000,9000,3000,3000,2500,6500,22000,65500;,,,2625,6000,7000,6000,10000,,15000,7500;54125;135125
34;narned;12500,30000,42500,16000,6000,7000,9000,7500,0,0,0,0,45500;,,6000,4500,6000,7000,3500,15000,3500,,;45500;133500
35;coach_147;21000,12000,33000,0,0,0,4000,15000,10000,5000,0,33000,67000;,,,8250,3500,7000,,10000,,3000,;31750;131750
36;Nathalie;0,0,0,4500,6000,0,4000,0,3000,0,0,6600,24100;1050,9000,12000,8250,10000,12000,3500,15000,10000,3750,7500;92050;116150
37;karhu;,,0,,,17500,12000,3000,20000,2500,4000,13250,72250;2250,3000,12000,2625,6000,7000,,,,3750,5000;41625;113875;26
38;pav;6500,12000,18500,6000,6000,12000,9000,3000,3000,2500,6500,22000,70000;${NONE};0;88500
39;LauraLove;3000,30000,33000,4500,6000,4000,4000,3750,3000,2500,8000,13250,49000;,3000,,,,,,,,,;3000;85000
40;Alex;0,9000,9000,8500,3000,0,20000,1500,5000,0,8000,9900,55900;2250,3000,6000,,,7000,,,,,;18250;83150;12
41;Pluton81;6500,12000,18500,4500,3000,4000,12000,7500,5000,2500,4000,13250,55750;4500,3000,,,,,,,,,;7500;81750
42;lucky;,,0,0,3000,0,0,3000,3000,2500,12500,13250,37250;1050,2000,,4500,3500,7000,3500,10000,3500,,;35050;72300;26
43;Manula;12500,20000,32500,1000,12000,12000,9000,0,0,0,0,0,34000;${NONE};0;66500
44;SNG;,,0,,,,,,,,,33000,33000;,,,,3500,12000,,,,,;15500;48500
45;rullles;,,0,,,,,,,,,6600,6600;1050,6000,6000,,10000,,3500,10000,3500,,;40050;46650
46;Dennis147d;0,9000,9000,0,0,4000,0,0,0,0,0,9900,13900;,,8000,2625,,,,10000,,3000,;23625;46525
47;SEREGA147;3000,20000,23000,8500,0,0,0,0,0,0,0,13250,21750;1050,,,,,,,,,,;1050;45800
48;nalban;8000,12000,20000,1000,0,7000,9000,0,0,0,0,0,17000;${NONE};0;37000
49;алексей дмитриев;0,0,0,0,3000,0,4000,1500,2000,0,0,0,10500;,,,,,,,,,3000,20000;23000;33500
50;Хайрош;6500,12000,18500,4500,3000,4000,0,0,0,2500,0,0,14000;${NONE};0;32500
51;Андрей Роберт;3000,9000,12000,8500,3000,4000,0,0,0,0,0,0,15500;${NONE};0;27500
52;Rockett;0,20000,20000,1000,0,0,0,0,0,0,0,0,1000;${NONE};0;21000
53;Евгений Z;,,0,,,,,,,,,6600,6600;,,,,,,3500,10000,,,;13500;20100;26
54;SleeP;0,9000,9000,${MID},9900,9900;${NONE};0;18900
55;Barbambeya;0,9000,9000,${MID},9900,9900;${NONE};0;18900
56;serый;6500,9000,15500,1000,0,0,0,0,0,0,0,0,1000;${NONE};0;16500
57;tatiana12;,,0,,,,,,,,,,;1050,3000,6000,,,4000,,,,,;14050;14050
58;Spy;,,0,,,,,,,,,9900,9900;,,,,,4000,,,,,;4000;13900
59;vvv65;,,0,,,,,,,,,13250,13250;${NONE};0;13250
60;chizhykoff;,,0,,,,,,,,,13250,13250;${NONE};0;13250
61;Минна;,,0,,,,,,,,,13250,13250;${NONE};0;13250
62;IngvarC;,,0,,,,,,,,,9900,9900;${NONE};0;9900
63;Maybe;0,9000,9000,${MID},0,0;${NONE};0;9000
64;SnookerRoom-RU;0,0,0,0,6000,0,0,0,0,0,0,0,6000;${NONE};0;6000
65;nic_olaevich;0,6000,6000,${MID},0,0;${NONE};0;6000
66;Trump05;,,0,,,,,3750,2000,0,0,0,5750;${NONE};0;5750;26
67;bbg;0,0,0,0,0,0,0,1500,0,0,0,0,1500;${NONE};0;1500
68;semen15;${ZEROS};${NONE};0;0
69;VitalyKiev;${ZEROS};${NONE};0;0;12
70;Айка7;${ZEROS};${NONE};0;0
71;Neil;${ZEROS};${NONE};0;0;12
72;Jekson;${ZEROS};${NONE};0;0
;;,,0,,,,,,,,,,;${NONE};0;
;;,,0,,,,,,,,,,;${NONE};0;
;;,,0,,,,,,,,,,;${NONE};0;`;

const players = source.trim().split("\n").map((line) => {
  const [place, name, first, second, subtotal, total, flag] = line.split(";");
  return {
    place,
    name,
    values: [...first.split(","), ...second.split(","), subtotal, "", total],
    flag: flag ? Number(flag) : -1,
  };
});

const group = (v: string, plain?: boolean) => (plain ? v : v.replace(/(\d)(?=\d{3}$)/, "$1 "));

const toneOf = (place: string, col: number, base?: Tone): Tone => {
  if (!place) return "teal";
  if (place === "57" && col === 2) return "teal";
  if (place === "57" && col === 14) return "blue";
  return base ?? "teal";
};

const tabs = [
  ["Главная", 64], ["Вставка", 74], ["Разметка страницы", 129], ["Формулы", 82],
  ["Данные", 66], ["Рецензирование", 124], ["Вид", 44],
] as const;

const Foot = ({ label, launch }: { label: string; launch?: boolean }) => (
  <GroupFoot>
    <span>{label}</span>
    {launch && <button aria-label={label}><Launcher /></button>}
  </GroupFoot>
);

const Combo = ({ w, value, label }: { w: number; value: string; label: string }) => (
  <PickWrap $w={w}>
    <Pick aria-label={label} defaultValue={value}><option>{value}</option></Pick>
    <Arrow />
  </PickWrap>
);

const Big = ({ w, icon, top, bottom }: { w: number; icon: React.ReactNode; top: string; bottom?: string }) => (
  <BigButton $w={w}>
    <BigIcon>{icon}</BigIcon>
    <span>{top}</span>
    <ArrowLine>{bottom}<Arrow /></ArrowLine>
  </BigButton>
);

const Aero = () => (
  <Glass aria-hidden="true">
    <defs>
      <filter id="soft" x="-5%" y="-50%" width="110%" height="200%"><feGaussianBlur stdDeviation="4" /></filter>
      <filter id="edge" x="-50%" y="-50%" width="200%" height="200%"><feGaussianBlur stdDeviation="2" /></filter>
    </defs>
    <g filter="url(#soft)">
      <rect x="0" y="8" width="180" height="20" fill="#a9b8c6" />
      <rect x="235" y="5" width="70" height="22" fill="#b9d2ea" />
      <rect x="310" y="6" width="90" height="22" fill="#c4e0fa" />
      <rect x="400" y="6" width="170" height="22" fill="#b5cbe0" />
      <rect x="845" y="16" width="36" height="12" fill="#a8cdec" />
      <rect x="1490" y="0" width="190" height="28" fill="#14202c" />
      <rect x="1500" y="10" width="22" height="10" fill="#7f95aa" />
      <rect x="1550" y="0" width="18" height="14" fill="#65788b" />
      <rect x="1572" y="18" width="108" height="8" fill="#8d98a2" />
    </g>
    <g fill="#111b27" filter="url(#edge)">
      {[210, 311, 409, 507, 605, 703, 800, 898, 996, 1095, 1193, 1291, 1390].map((x) => (
        <path key={x} d={`M${x - 8} 0h16l-6 14h-4z`} />
      ))}
    </g>
    <g filter="url(#edge)" opacity=".7">
      <rect x="812" y="9" width="14" height="10" fill="#2d6fae" />
      <rect x="911" y="9" width="13" height="12" fill="#35605c" />
      <rect x="1007" y="9" width="13" height="12" fill="#3f7a66" />
      <rect x="1205" y="9" width="13" height="12" fill="#1f6478" />
      <circle cx="1308" cy="15" r="7" fill="#2b4a2c" />
      {[833, 932, 1028, 1125, 1222, 1325, 1423].map((x) => <rect key={x} x={x} y="13" width="24" height="4" fill="#4a6078" />)}
      {[880, 978, 1076, 1174, 1272, 1370, 1468].map((x) => <rect key={x} x={x} y="12" width="6" height="6" fill="#4a6078" />)}
    </g>
  </Glass>
);

export default function App() {
  return (
    <Desktop>
      <GlobalStyle />
      <TitleBar>
        <Aero />
        <OfficeButton aria-label="Office"><OfficeLogo /></OfficeButton>
        <QuickAccess>
          <button aria-label="Сохранить"><SaveIcon /></button>
          <button aria-label="Отменить"><UndoIcon /></button>
          <Arrow />
          <button aria-label="Повторить"><UndoIcon c="#94a6ba" flip /></button>
          <Arrow c="#8b9cb2" />
          <QuickFilter aria-label="Фильтр"><FilterEq /></QuickFilter>
        </QuickAccess>
        <CustomizeButton aria-label="Настройка панели">
          <svg width="7" height="8" viewBox="0 0 7 8"><path d="M1 1h5" stroke="#1f3f86" strokeWidth="1.500" /><path d="M0 4h7L3.500 7.500z" fill="#1f3f86" /></svg>
        </CustomizeButton>
        <WindowTitle>КОНКУРС new seedengs (Автосохраненный) - Microsoft Excel</WindowTitle>
        <ContextTitle>Работа с таблицами</ContextTitle>
        <WindowButtons>
          <WindowButton aria-label="Свернуть"><svg width="11" height="4"><rect width="11" height="4" fill="#fff" stroke="#444" /></svg></WindowButton>
          <WindowButton aria-label="Развернуть"><svg width="12" height="12" viewBox="0 0 12 12"><path d="M4 1h7v7H9M1.500 4h6v6.500h-6z" fill="none" stroke="#fff" strokeWidth="1.800" /></svg></WindowButton>
          <WindowButton $close aria-label="Закрыть"><svg width="11" height="10" viewBox="0 0 11 10"><path d="M1.500 1l8 8M9.500 1l-8 8" stroke="#fff" strokeWidth="2.600" /></svg></WindowButton>
        </WindowButtons>
      </TitleBar>

      <TabRow>
        {tabs.map(([t, w], k) => <RibbonTab key={t} $w={w} $on={k === 0}>{t}</RibbonTab>)}
        <RibbonTab $w={120} $context>Конструктор</RibbonTab>
        <TabTools>
          <button aria-label="Справка"><svg width="14" height="14" viewBox="0 0 14 14"><circle cx="7" cy="7" r="6.300" fill="#2f62c8" stroke="#dfe9f8" /><path d="M5 5.500C5 3 9 3 9 5.300 9 7 7 6.800 7 8.500M7 9.800v1.400" fill="none" stroke="#fff" strokeWidth="1.400" /></svg></button>
          <button aria-label="Свернуть книгу"><svg width="11" height="10"><path d="M2 8h7" stroke="#6a7688" strokeWidth="2" /></svg></button>
          <button aria-label="Восстановить книгу"><svg width="13" height="10" viewBox="0 0 13 10"><path d="M4.500 1.500h6v4M2.500 3.500h6v4h-6z" fill="none" stroke="#6a7688" strokeWidth="1.300" /></svg></button>
          <button aria-label="Закрыть книгу"><svg width="11" height="10" viewBox="0 0 11 10"><path d="M1.500 1l7 8M8.500 1l-7 8" stroke="#6a7688" strokeWidth="2" /></svg></button>
        </TabTools>
      </TabRow>

      <Ribbon>
        <Group $w={190}>
          <GroupBody>
            <Big w={52} icon={<PasteIcon />} top="Вставить" />
            <SmallStack>
              <SmallButton><CutIcon />Вырезать</SmallButton>
              <SmallButton><CopyIcon />Копировать</SmallButton>
              <SmallButton><BrushIcon />Формат по образцу</SmallButton>
            </SmallStack>
          </GroupBody>
          <Foot label="Буфер обмена" launch />
        </Group>

        <Group $w={196}>
          <GroupBody>
            <Rows>
              <Row>
                <Row $gap={0}>
                  <Combo w={97} value="Calibri" label="Шрифт" />
                  <Combo w={43} value="11" label="Размер шрифта" />
                </Row>
                <Joined>
                  <ToolButton aria-label="Увеличить шрифт"><b>A</b><SizeMark up /></ToolButton>
                  <ToolButton aria-label="Уменьшить шрифт"><SmallA>A</SmallA><SizeMark /></ToolButton>
                </Joined>
              </Row>
              <Row>
                <Joined>
                  <ToolButton><b>Ж</b></ToolButton>
                  <ToolButton $w={23}><i>К</i></ToolButton>
                  <ToolButton $w={33}><u>Ч</u><Arrow /></ToolButton>
                </Joined>
                <Joined><ToolButton $w={33} aria-label="Границы"><BorderIcon /><Arrow /></ToolButton></Joined>
                <Joined>
                  <ToolButton $w={33} aria-label="Заливка"><FillIcon /><Arrow /></ToolButton>
                  <ToolButton $w={32} aria-label="Цвет текста"><LetterColor>A</LetterColor><Arrow /></ToolButton>
                </Joined>
              </Row>
            </Rows>
          </GroupBody>
          <Foot label="Шрифт" launch />
        </Group>

        <Group $w={355}>
          <GroupBody>
            <Rows>
              <Row>
                <Joined>
                  <ToolButton aria-label="По верхнему краю"><Lines y={[1, 3, 5, 7]} w={[14, 10, 14, 10]} /></ToolButton>
                  <ToolButton $w={23} aria-label="По середине"><Lines y={[4, 6, 8, 10]} w={[14, 10, 14, 10]} /></ToolButton>
                  <ToolButton $w={23} $on aria-label="По нижнему краю"><Lines y={[6, 8, 10, 12]} w={[10, 14, 10, 14]} /></ToolButton>
                </Joined>
                <Joined><ToolButton $w={30} aria-label="Ориентация"><OrientIcon /><Arrow /></ToolButton></Joined>
              </Row>
              <Row>
                <Joined>
                  <ToolButton aria-label="По левому краю"><Lines align="left" y={ALL} w={[14, 9, 14, 9, 14, 9]} /></ToolButton>
                  <ToolButton $w={23} aria-label="По центру"><Lines y={ALL} w={[14, 10, 14, 10, 14, 10]} /></ToolButton>
                  <ToolButton $w={23} aria-label="По правому краю"><Lines align="right" y={ALL} w={[14, 9, 14, 9, 14, 9]} /></ToolButton>
                </Joined>
                <Joined>
                  <ToolButton aria-label="Уменьшить отступ"><IndentIcon /></ToolButton>
                  <ToolButton aria-label="Увеличить отступ"><IndentIcon right /></ToolButton>
                </Joined>
              </Row>
            </Rows>
            <Divider />
            <Rows>
              <SmallButton><WrapIcon />Перенос текста</SmallButton>
              <SmallButton $off><MergeIcon />Объединить и поместить в центре<Arrow c="#a0a4aa" /></SmallButton>
            </Rows>
          </GroupBody>
          <Foot label="Выравнивание" launch />
        </Group>

        <Group $w={136}>
          <GroupBody>
            <Rows>
              <Combo w={128} value="Общий" label="Числовой формат" />
              <Row>
                <Joined>
                  <ToolButton $w={34} aria-label="Денежный формат"><MoneyIcon /><Arrow /></ToolButton>
                  <ToolButton>%</ToolButton>
                  <ToolButton>000</ToolButton>
                </Joined>
                <Joined>
                  <ToolButton $w={21} aria-label="Увеличить разрядность"><Decimal><span><em>←</em>,0</span><span>,00</span></Decimal></ToolButton>
                  <ToolButton $w={21} aria-label="Уменьшить разрядность"><Decimal><span>,00</span><span><em>→</em>,0</span></Decimal></ToolButton>
                </Joined>
              </Row>
            </Rows>
          </GroupBody>
          <Foot label="Число" launch />
        </Group>

        <Group $w={249}>
          <GroupBody>
            <Big w={107} icon={<CondIcon />} top="Условное" bottom="форматирование" />
            <Big w={90} icon={<TableIcon />} top="Форматировать" bottom="как таблицу" />
            <Big w={44} icon={<StylesIcon />} top="Стили" bottom="ячеек" />
          </GroupBody>
          <Foot label="Стили" />
        </Group>

        <Group $w={152}>
          <GroupBody>
            <Big w={50} icon={<InsertCells />} top="Вставить" />
            <Big w={48} icon={<DeleteCells />} top="Удалить" />
            <Big w={46} icon={<FormatCells />} top="Формат" />
          </GroupBody>
          <Foot label="Ячейки" />
        </Group>

        <Group $w={234}>
          <GroupBody>
            <SmallStack $w={93}>
              <SmallButton><SumIcon />Автосумма<Arrow /></SmallButton>
              <SmallButton><FillDown />Заполнить<Arrow /></SmallButton>
              <SmallButton><Eraser />Очистить<Arrow /></SmallButton>
            </SmallStack>
            <Big w={68} icon={<SortBox><span>А</span><span>Я</span><Funnel /></SortBox>} top="Сортировка" bottom="и фильтр" />
            <Big w={64} icon={<Binoculars />} top="Найти и" bottom="выделить" />
          </GroupBody>
          <Foot label="Редактирование" />
        </Group>
      </Ribbon>

      <FormulaBar>
        <NameBox aria-label="Имя ячейки" defaultValue="AH2" />
        <NameArrow aria-label="Список имён"><svg width="7" height="4"><path d="M0 0h7L3.500 4z" fill="#111" /></svg></NameArrow>
        <FxPill><Knob /><i>f<small>x</small></i></FxPill>
        <FormulaInput aria-label="Строка формул" />
        <ExpandButton aria-label="Развернуть строку формул"><svg width="8" height="10" viewBox="0 0 8 10"><path d="M1 1l3 3 3-3M1 5l3 3 3-3" fill="none" stroke="#111" strokeWidth="1.500" /></svg></ExpandButton>
      </FormulaBar>

      <Work>
        <SheetColumn>
          <SheetView>
            <Sheet>
              <colgroup>
                <col width={26} />
                <col width={22} />
                <col width={100} />
                {columns.map((c) => <col key={c.title} width={c.w} />)}
                <col />
              </colgroup>
              <thead>
                <tr>
                  <CornerCell />
                  <HeadCell $left>Столбец1</HeadCell>
                  <HeadCell $thick>Столбец2</HeadCell>
                  {columns.map((c, k) => <HeadCell key={c.title} $left={c.left} $thick={c.thick || k === 2 || k === 12}>{c.title}</HeadCell>)}
                  <HeadCell $left $on $inset>Столбец34</HeadCell>
                </tr>
              </thead>
              <tbody>
                {players.map((p, r) => (
                  <BodyRow key={r} $band={r % 2 === 0}>
                    <RowHead scope="row">{34 + r}</RowHead>
                    <Cell $tone="red">{p.place}</Cell>
                    <NameCell>{p.name}</NameCell>
                    {p.values.map((v, k) => (
                      <Cell
                        key={k}
                        $tone={toneOf(p.place, k, columns[k].tone)}
                        $thick={columns[k].thick}
                        $flag={p.flag === k}
                        className={p.place === "49" && k === 23 ? "marked" : undefined}
                      >
                        {group(v, columns[k].plain)}
                      </Cell>
                    ))}
                    <Cell />
                  </BodyRow>
                ))}
              </tbody>
            </Sheet>
          </SheetView>
          <BottomBar>
            <SheetNav>
              <button aria-label="Первый лист"><Tri c="#1f3f86" d="M1 1h1.500v7H1zM8 1v7L3.500 4.500z" /></button>
              <button aria-label="Предыдущий лист"><Tri c="#1f3f86" d="M6.500 1v7L2 4.500z" /></button>
              <button aria-label="Следующий лист"><Tri c="#1f3f86" d="M2 1v7l4.500-3.500z" /></button>
              <button aria-label="Последний лист"><Tri c="#1f3f86" d="M6.500 1H8v7H6.500zM1 1v7l4.500-3.500z" /></button>
            </SheetNav>
            <TabShape $w={60}><TabFace w={60} on /><SheetTab $on>Лист1</SheetTab></TabShape>
            <TabShape $w={59}><TabFace w={59} /><SheetTab>Лист2</SheetTab></TabShape>
            <TabShape $w={59}><TabFace w={59} /><SheetTab>Лист3</SheetTab></TabShape>
            <TabShape $w={45}>
              <TabFace w={45} />
              <SheetTab aria-label="Вставить лист"><svg width="14" height="12" viewBox="0 0 14 12"><path d="M3.500 2.500h10v7h-3l-1 2h-6z" fill="#f4f8fe" stroke="#5f7ba8" /><path d="M3.500 0v7M0 3.500h7M1 1l5 5M6 1L1 6" stroke="#e8962c" /></svg></SheetTab>
            </TabShape>
            <HScroll>
              <HSplit />
              <ScrollArrow aria-label="Влево"><Tri d="M6.500 0v9L2 4.500z" /></ScrollArrow>
              <HThumb><i /><i /><i /><i /></HThumb>
              <ScrollArrow aria-label="Вправо"><Tri d="M2 0v9l4.500-4.500z" /></ScrollArrow>
              <HSplit />
            </HScroll>
          </BottomBar>
        </SheetColumn>
        <VScroll>
          <VSplit />
          <ScrollArrow aria-label="Вверх"><Tri d="M0 6.500h9L4.500 2z" /></ScrollArrow>
          <VThumb><i /><i /><i /><i /></VThumb>
          <ScrollArrow $end aria-label="Вниз"><Tri d="M0 2h9L4.500 6.500z" /></ScrollArrow>
        </VScroll>
      </Work>

      <StatusBar>
        <Ready>Готово</Ready>
        <StatusRight>
          <ViewButtons>
            <ViewButton $on aria-label="Обычный"><svg width="13" height="11" viewBox="0 0 13 11"><path d="M.5.500h12v10H.5zM4.500 0v11M8.500 0v11M0 3.800h13M0 7.200h13" fill="#fff" stroke="#555" /></svg></ViewButton>
            <ViewButton aria-label="Разметка"><svg width="13" height="12" viewBox="0 0 13 12"><path d="M.5.500h12v11H.5z" fill="#b9bcc2" stroke="#555" /><path d="M4 2.500h5v7H4z" fill="#fff" stroke="#555" /></svg></ViewButton>
            <ViewButton aria-label="Страничный"><svg width="13" height="12" viewBox="0 0 13 12"><path d="M.5.500h12v11H.5z" fill="#b9bcc2" stroke="#555" /><path d="M2 .5h4v7H2zM7.500.500h3.500v7H7.500z" fill="#fff" stroke="#555" /></svg></ViewButton>
          </ViewButtons>
          <ZoomValue>91%</ZoomValue>
          <button aria-label="Уменьшить масштаб"><Round /></button>
          <ZoomSlider type="range" aria-label="Масштаб" min={0} max={100} defaultValue={45} />
          <button aria-label="Увеличить масштаб"><Round plus /></button>
        </StatusRight>
      </StatusBar>

      <Taskbar>
        <TaskIcon $w={38} aria-label="Пуск"><StartOrb /></TaskIcon>
        <TaskIcon $w={76} aria-label="Internet Explorer"><IeIcon /></TaskIcon>
        <TaskButton aria-label="Chrome"><ChromeIcon /></TaskButton>
        <TaskButton aria-label="Torrent"><Torrent s={32} /></TaskButton>
        <TaskButton $stack aria-label="Battle.net"><Knot s={31} /></TaskButton>
        <TaskButton $on aria-label="Excel"><ExcelIcon /></TaskButton>
        <TaskButton aria-label="Проводник"><FolderIcon /></TaskButton>
        <Tray>
          <Lang>RU</Lang>
          <Knot s={16} />
          <Torrent s={16} />
          <UpdateIcon />
          <Dropbox />
          <Avast />
          <Acrobat />
          <FlagIcon />
          <NetIcon />
          <SoundIcon />
          <Clock>2:13<br />13.02.2017</Clock>
          <ShowDesktop aria-label="Показать рабочий стол" />
        </Tray>
      </Taskbar>
    </Desktop>
  );
}
